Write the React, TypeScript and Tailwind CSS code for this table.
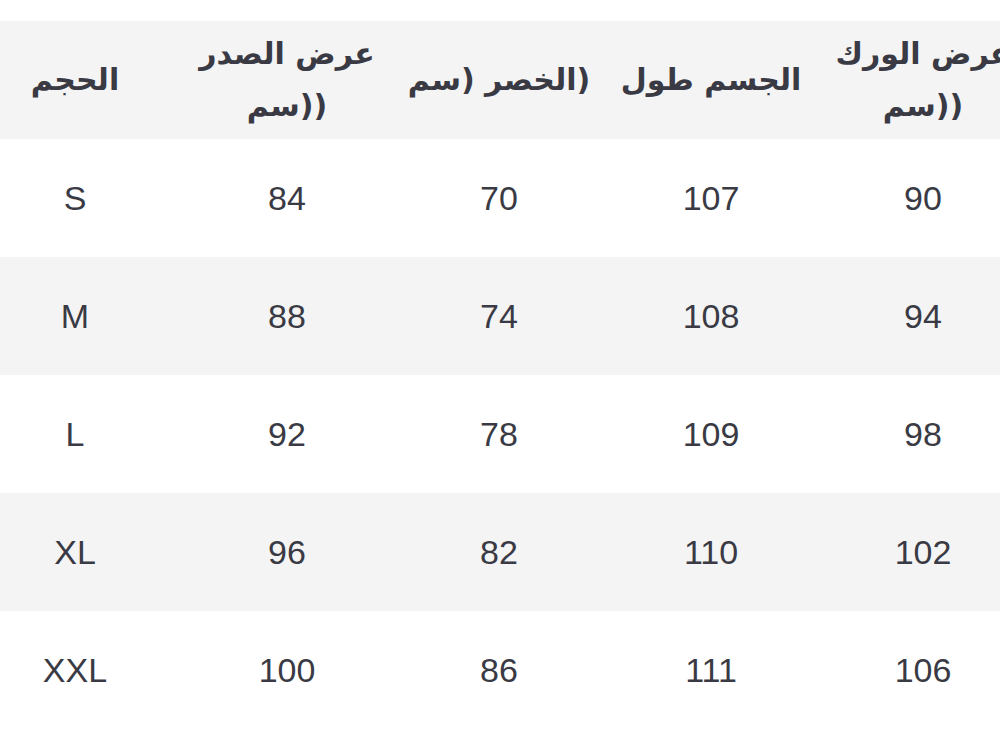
import React from "react";

const rows = [
  ["S", "84", "70", "107", "90"],
  ["M", "88", "74", "108", "94"],
  ["L", "92", "78", "109", "98"],
  ["XL", "96", "82", "110", "102"],
  ["XXL", "100", "86", "111", "106"],
];

const headers: string[][] = [
  ["الحجم"],
  ["عرض الصدر", "((سم"],
  ["(الخصر (سم"],
  ["الجسم طول"],
  ["عرض الورك", "((سم"],
];

export default function App() {
  return (
    <div className="w-[1000px] h-[750px] overflow-hidden bg-white text-[#3a3a44]">
      <div className="h-[21px]" />
      <div className="-ml-[31px] w-[1060px]">
        <div className="grid grid-cols-5 h-[118px] bg-[#f4f4f4]">
          {headers.map((h, i) => (
            <div
              key={i}
              dir="rtl"
              className="flex flex-col items-center justify-center gap-[6px] text-[30px] leading-[46px] font-bold [font-family:'DejaVu_Sans',sans-serif]"
            >
              {h.map((l, j) => (
                <div key={j}>{l}</div>
              ))}
            </div>
          ))}
        </div>
        {rows.map((r, i) => (
          <div
            key={i}
            className={`grid grid-cols-5 h-[118px] ${i % 2 === 1 ? "bg-[#f4f4f4]" : "bg-white"}`}
          >
            {r.map((c, j) => (
              <div
                key={j}
                className="flex items-center justify-center text-[34px] [font-family:'Liberation_Sans',Arial,sans-serif]"
              >
                {c}
              </div>
            ))}
          </div>
        ))}
      </div>
    </div>
  );
}
